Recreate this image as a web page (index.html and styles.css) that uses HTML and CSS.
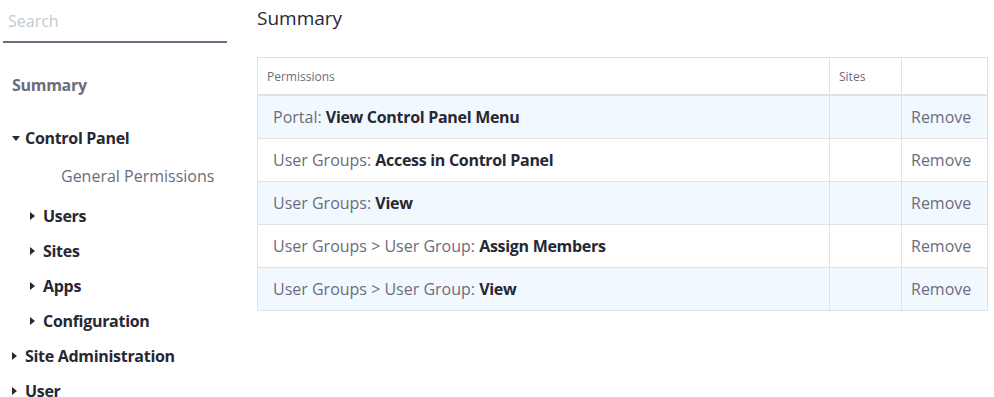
FILE: index.html
```html
<!DOCTYPE html>
<html lang="en">
<head>
    <meta charset="UTF-8">
    <meta name="viewport" content="width=device-width, initial-scale=1.0">
    <title>Summary</title>
    <link rel="stylesheet" href="styles.css">
</head>
<body>

<div class="page">
    <aside class="sidebar">
        <input class="search" type="text" placeholder="Search">
        <div class="summary-link">Summary</div>
        <ul class="tree">
            <li class="node open top">Control Panel</li>
            <li class="leaf">General Permissions</li>
            <li class="node sub first">Users</li>
            <li class="node sub">Sites</li>
            <li class="node sub">Apps</li>
            <li class="node sub">Configuration</li>
            <li class="node">Site Administration</li>
            <li class="node">User</li>
        </ul>
    </aside>

    <main class="content">
        <h2>Summary</h2>
        <table class="perms">
            <colgroup>
                <col>
                <col class="col-sites">
                <col class="col-action">
            </colgroup>
            <thead>
                <tr>
                    <th>Permissions</th>
                    <th>Sites</th>
                    <th></th>
                </tr>
            </thead>
            <tbody>
                <tr>
                    <td class="perm">Portal: <strong>View Control Panel Menu</strong></td>
                    <td></td>
                    <td class="action">Remove</td>
                </tr>
                <tr>
                    <td class="perm">User Groups: <strong>Access in Control Panel</strong></td>
                    <td></td>
                    <td class="action">Remove</td>
                </tr>
                <tr>
                    <td class="perm">User Groups: <strong>View</strong></td>
                    <td></td>
                    <td class="action">Remove</td>
                </tr>
                <tr>
                    <td class="perm">User Groups &gt; User Group: <strong>Assign Members</strong></td>
                    <td></td>
                    <td class="action">Remove</td>
                </tr>
                <tr>
                    <td class="perm">User Groups &gt; User Group: <strong>View</strong></td>
                    <td></td>
                    <td class="action">Remove</td>
                </tr>
            </tbody>
        </table>
    </main>
</div>

</body>
</html>
```

FILE: styles.css
```css
body {
    font-family: "Open Sans", Lato, sans-serif;
    margin: 0;
    background: #fff;
    color: #272833;
}
strong,
.node,
.summary-link {
    letter-spacing: -0.3px;
}
.page {
    display: flex;
}
.sidebar {
    width: 224px;
    padding-left: 3px;
    flex-shrink: 0;
}
.search {
    display: block;
    width: 100%;
    height: 43px;
    box-sizing: border-box;
    border: none;
    border-bottom: 2px solid #6b6c7e;
    padding: 0 5px;
    font-family: inherit;
    font-size: 16px;
    color: #272833;
    outline: none;
}
.search::placeholder {
    color: #c3cad3;
}
.summary-link {
    margin: 30px 0 0 9px;
    line-height: 24px;
    font-size: 16px;
    font-weight: bold;
    color: #6b6c7e;
}
.tree {
    list-style: none;
    margin: 0;
    padding: 0;
}
.tree li {
    line-height: 24px;
    font-size: 16px;
    margin-top: 11px;
}
.tree .top {
    margin-top: 29px;
}
.node {
    font-weight: bold;
    padding-left: 22px;
    position: relative;
}
.node::before {
    content: "";
    position: absolute;
    left: 9px;
    top: 8px;
    border-top: 4px solid transparent;
    border-bottom: 4px solid transparent;
    border-left: 5px solid #272833;
}
.node.open::before {
    left: 9px;
    top: 10px;
    border-left: 4px solid transparent;
    border-right: 4px solid transparent;
    border-top: 5px solid #272833;
    border-bottom: none;
}
.node.sub {
    padding-left: 40px;
}
.node.sub::before {
    left: 27px;
}
.tree .leaf {
    margin-top: 14px;
    padding-left: 58px;
    color: #6b6c7e;
}
.tree .first {
    margin-top: 16px;
}
.content {
    flex: 1;
    margin-left: 30px;
    margin-right: 6px;
}
h2 {
    margin: 5px 0 0;
    font-size: 19px;
    font-weight: normal;
    line-height: 26px;
}
.perms {
    width: 100%;
    margin-top: 26px;
    border-collapse: collapse;
    table-layout: fixed;
    font-size: 16px;
}
.col-sites {
    width: 72px;
}
.col-action {
    width: 86px;
}
.perms th,
.perms td {
    border: 1px solid #e1e1e6;
}
.perms th {
    height: 36px;
    font-size: 12px;
    font-weight: normal;
    color: #6b6c7e;
    text-align: left;
    padding: 0 9px;
    border-bottom: 2px solid #e1e1e6;
}
.perms td {
    height: 42px;
    padding: 0 9px;
    color: #6b6c7e;
    white-space: nowrap;
}
.perms td.perm {
    padding-left: 15px;
}
.perms td strong {
    color: #272833;
}
.perms tbody tr:nth-child(odd) td {
    background: #f2f9fe;
}
```
